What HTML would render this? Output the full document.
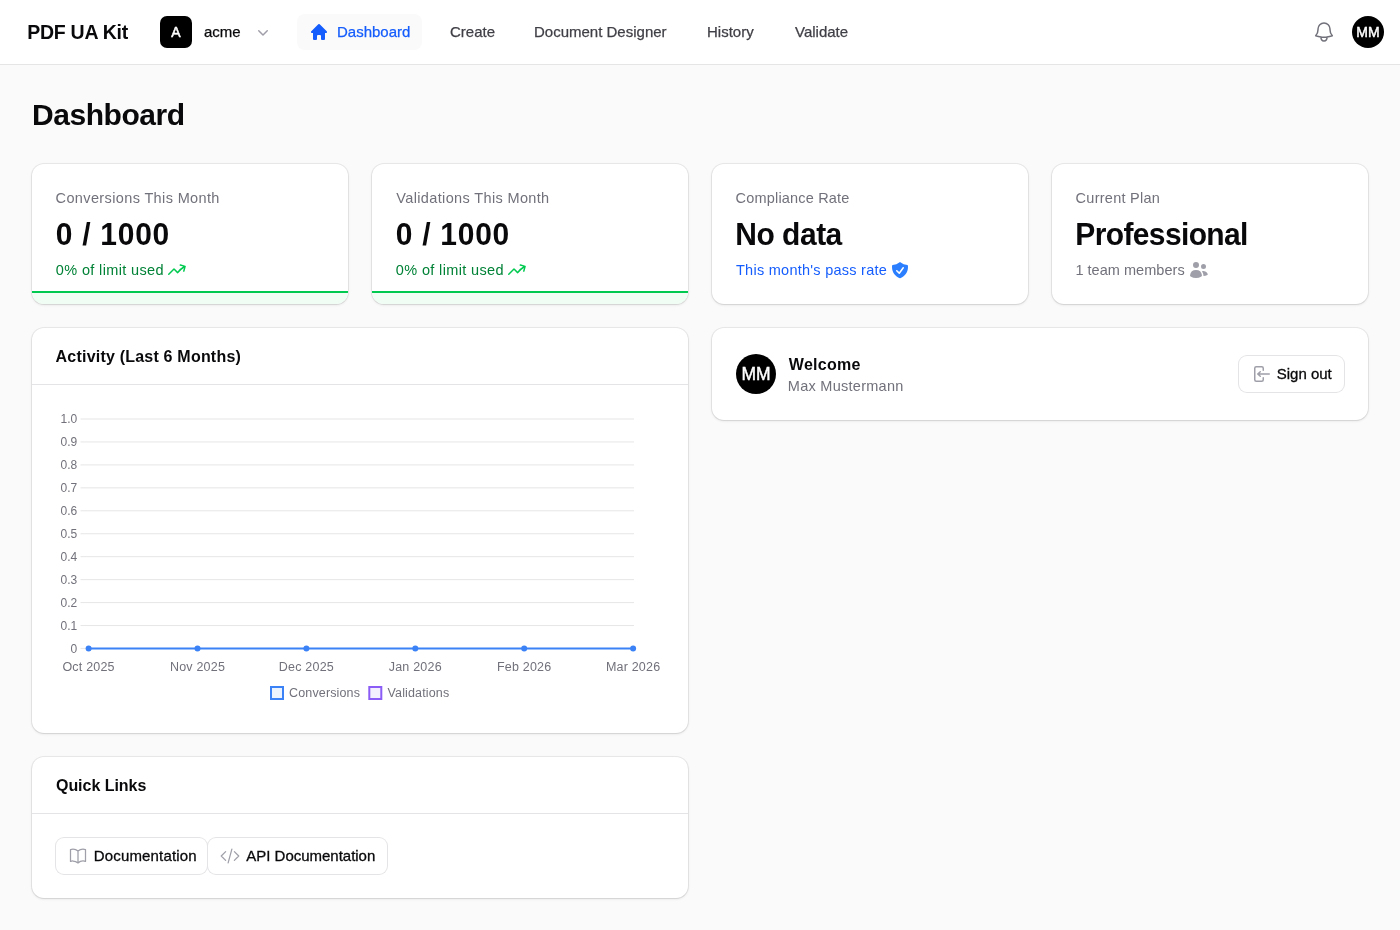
<!DOCTYPE html>
<html lang="en">
<head>
<meta charset="utf-8">
<title>PDF UA Kit - Dashboard</title>
<style>
*{box-sizing:border-box;margin:0;padding:0}
html,body{width:1400px;height:930px;overflow:hidden}
body{will-change:transform;background:#fafafa;font-family:"Liberation Sans",sans-serif;color:#09090b;position:relative}
.abs{position:absolute;white-space:nowrap}
header{position:absolute;left:0;top:0;width:1400px;height:65px;background:#fff;border-bottom:1px solid #e5e5e5}
.brand{left:28px;top:19.500px;font-size:19.500px;font-weight:700;line-height:24px;letter-spacing:0.150px}
.orgav{left:160px;top:16px;width:32px;height:32px;border-radius:7px;background:#000;color:#fff;font-size:14px;text-align:center;line-height:32px;-webkit-text-stroke:0.500px #fff}
.org{left:204px;top:22px;font-size:15px;line-height:20px;color:#09090b;-webkit-text-stroke:0.250px #09090b}
.navpill{left:297px;top:14px;width:125px;height:36px;border-radius:8px;background:#fafafa}
.nav{top:22px;font-size:15px;line-height:20px;color:#3f3f46;-webkit-text-stroke:0.250px #3f3f46}
.nav.active{color:#155dfc;-webkit-text-stroke-color:#155dfc}
.avatar{border-radius:50%;background:#000;color:#fff;text-align:center;-webkit-text-stroke:0.450px #fff}
h1{position:absolute;left:32px;top:96.500px;font-size:30px;line-height:36px;font-weight:700;letter-spacing:-0.450px;white-space:nowrap}
.card{position:absolute;background:#fff;border-radius:12px;box-shadow:0 0 0 1px rgba(9,9,11,.07),0 1px 3px 0 rgba(0,0,0,.1),0 1px 2px -1px rgba(0,0,0,.1);overflow:hidden}
.stat{top:164px;width:316px;height:140px}
.stat .lbl{position:absolute;left:24px;top:24px;font-size:14.500px;line-height:20px;color:#71717b;white-space:nowrap;letter-spacing:.3px}
.stat .val{position:absolute;left:24px;top:52.500px;font-size:30px;line-height:36px;font-weight:700;white-space:nowrap;letter-spacing:-0.400px;transform:scaleY(1.045);transform-origin:0 28.500px}
.stat .sub{position:absolute;left:24px;top:96px;font-size:14.500px;line-height:20px;white-space:nowrap;letter-spacing:.3px}
.green{color:#008236}.blue{color:#155dfc}.gray{color:#71717b}
.bar{position:absolute;left:0;right:0;top:127px;height:13px;background:#f0fdf4;border-top:2px solid #00c950}
.chead{position:absolute;left:0;right:0;top:0;height:57px;border-bottom:1px solid #e4e4e7}
.chead span{position:absolute;left:24px;top:19px;font-size:16px;line-height:20px;font-weight:700;white-space:nowrap;letter-spacing:.1px}
.btn{position:absolute;height:36px;border-radius:8px;background:#fff;box-shadow:0 0 0 1px #e4e4e7;font-size:15px;line-height:36px;white-space:nowrap;-webkit-text-stroke:0.300px #09090b}
svg{position:absolute;overflow:visible}
svg text{font-family:"Liberation Sans",sans-serif}
.ic{fill:none;stroke:#9f9fa9;stroke-width:1.5;stroke-linecap:round;stroke-linejoin:round}
</style>
</head>
<body>
<header>
  <div id="brand" class="abs brand" style="letter-spacing:-0.250px;margin-left:-0.86px">PDF UA Kit</div>
  <div class="abs orgav">A</div>
  <div class="abs org">acme</div>
  <svg style="left:253px;top:22px" width="20" height="20" viewBox="0 0 20 20"><path fill="#9f9fa9" fill-rule="evenodd" clip-rule="evenodd" d="M5.220 8.220a.750.750 0 0 1 1.060 0L10 11.940l3.720-3.720a.750.750 0 1 1 1.060 1.060l-4.250 4.250a.750.750 0 0 1-1.060 0L5.220 9.280a.750.750 0 0 1 0-1.060Z"/></svg>
  <div class="abs navpill"></div>
  <svg style="left:309px;top:22px" width="20" height="20" viewBox="0 0 20 20"><path fill="#155dfc" d="M9.293 2.293a1 1 0 0 1 1.414 0l7 7A1 1 0 0 1 17 11h-1v6a1 1 0 0 1-1 1h-2a1 1 0 0 1-1-1v-3a1 1 0 0 0-1-1H9a1 1 0 0 0-1 1v3a1 1 0 0 1-1 1H5a1 1 0 0 1-1-1v-6H3a1 1 0 0 1-.707-1.707l7-7Z"/></svg>
  <div class="abs nav active" style="left:337px">Dashboard</div>
  <div class="abs nav" style="left:450px">Create</div>
  <div class="abs nav" style="left:534px">Document Designer</div>
  <div class="abs nav" style="left:707px">History</div>
  <div class="abs nav" style="left:795px">Validate</div>
  <svg style="left:1312px;top:20px" width="24" height="24" viewBox="0 0 24 24"><path class="ic" style="stroke:#71717b" d="M14.857 17.082a23.848 23.848 0 0 0 5.454-1.310A8.967 8.967 0 0 1 18 9.750V9A6 6 0 0 0 6 9v.750a8.967 8.967 0 0 1-2.312 6.022c1.733.640 3.560 1.085 5.455 1.310m5.714 0a24.255 24.255 0 0 1-5.714 0m5.714 0a3 3 0 1 1-5.714 0"/></svg>
  <div class="abs avatar" style="left:1352px;top:16px;width:32px;height:32px;font-size:14px;line-height:32px">MM</div>
</header>

<h1>Dashboard</h1>

<div class="card stat" style="left:32px">
  <div id="lbl1" class="lbl" style="letter-spacing:0.369px;margin-left:-0.41px">Conversions This Month</div>
  <div id="val1" class="val" style="font-weight:700;letter-spacing:0.730px;margin-left:-0.25px">0 / 1000</div>
  <div id="sub1" class="sub green" style="letter-spacing:0.362px;margin-left:-0.20px">0% of limit used</div>
  <svg style="left:134.600px;top:96px" width="20" height="20" viewBox="0 0 20 20"><path fill="#00c950" fill-rule="evenodd" clip-rule="evenodd" d="M12.577 4.878a.750.750 0 0 1 .919-.530l4.780 1.281a.750.750 0 0 1 .531.919l-1.281 4.780a.750.750 0 0 1-1.449-.387l.810-3.022a19.407 19.407 0 0 0-5.594 5.203.750.750 0 0 1-1.139.093L7 10.060l-4.720 4.720a.750.750 0 0 1-1.060-1.061l5.250-5.250a.750.750 0 0 1 1.060 0l3.074 3.073a20.923 20.923 0 0 1 5.545-4.931l-3.042-.815a.750.750 0 0 1-.530-.919Z"/></svg>
  <div class="bar"></div>
</div>
<div class="card stat" style="left:372px">
  <div id="lbl2" class="lbl" style="letter-spacing:0.357px;margin-left:0.35px">Validations This Month</div>
  <div id="val2" class="val" style="font-weight:700;letter-spacing:0.730px;margin-left:-0.25px">0 / 1000</div>
  <div id="sub2" class="sub green" style="letter-spacing:0.362px;margin-left:-0.20px">0% of limit used</div>
  <svg style="left:134.600px;top:96px" width="20" height="20" viewBox="0 0 20 20"><path fill="#00c950" fill-rule="evenodd" clip-rule="evenodd" d="M12.577 4.878a.750.750 0 0 1 .919-.530l4.780 1.281a.750.750 0 0 1 .531.919l-1.281 4.780a.750.750 0 0 1-1.449-.387l.810-3.022a19.407 19.407 0 0 0-5.594 5.203.750.750 0 0 1-1.139.093L7 10.060l-4.720 4.720a.750.750 0 0 1-1.060-1.061l5.250-5.250a.750.750 0 0 1 1.060 0l3.074 3.073a20.923 20.923 0 0 1 5.545-4.931l-3.042-.815a.750.750 0 0 1-.530-.919Z"/></svg>
  <div class="bar"></div>
</div>
<div class="card stat" style="left:712px">
  <div id="lbl3" class="lbl" style="letter-spacing:0.182px;margin-left:-0.41px">Compliance Rate</div>
  <div id="val3" class="val" style="font-weight:700;letter-spacing:-0.492px;margin-left:-0.75px">No data</div>
  <div id="sub3" class="sub blue" style="letter-spacing:0.260px;margin-left:-0.01px">This month's pass rate</div>
  <svg style="left:178px;top:96px" width="20" height="20" viewBox="0 0 20 20"><path fill="#2b7fff" fill-rule="evenodd" d="M9.661 2.237a.531.531 0 0 1 .678 0 11.947 11.947 0 0 0 7.078 2.749.5.5 0 0 1 .479.425c.069.520.104 1.050.104 1.590 0 5.162-3.260 9.563-7.834 11.256a.480.480 0 0 1-.332 0C5.260 16.564 2 12.163 2 7c0-.538.035-1.069.104-1.589a.500.500 0 0 1 .480-.425 11.947 11.947 0 0 0 7.077-2.750Zm4.196 5.954a.750.750 0 0 0-1.214-.882l-3.483 4.790-1.880-1.880a.750.750 0 1 0-1.060 1.061l2.500 2.500a.750.750 0 0 0 1.137-.089l4-5.500Z" clip-rule="evenodd"/></svg>
</div>
<div class="card stat" style="left:1052px">
  <div id="lbl4" class="lbl" style="letter-spacing:0.265px;margin-left:-0.41px">Current Plan</div>
  <div id="val4" class="val" style="font-weight:700;letter-spacing:-0.623px;margin-left:-0.75px">Professional</div>
  <div id="sub4" class="sub gray" style="letter-spacing:0.037px;margin-left:-0.62px">1 team members</div>
  <svg style="left:136.700px;top:96px" width="20" height="20" viewBox="0 0 20 20"><path fill="#9f9fa9" d="M7 8a3 3 0 1 0 0-6 3 3 0 0 0 0 6ZM14.500 9a2.500 2.500 0 1 0 0-5 2.500 2.500 0 0 0 0 5ZM1.615 16.428a1.224 1.224 0 0 1-.569-1.175 6.002 6.002 0 0 1 11.908 0c.058.467-.172.920-.570 1.174A9.953 9.953 0 0 1 7 18a9.953 9.953 0 0 1-5.385-1.572ZM14.500 16h-.106c.070-.297.088-.611.048-.933a7.470 7.470 0 0 0-1.588-3.755 4.502 4.502 0 0 1 5.874 2.636.818.818 0 0 1-.360.980A7.465 7.465 0 0 1 14.500 16Z"/></svg>
</div>

<!-- Activity -->
<div class="card" style="left:32px;top:328px;width:656px;height:405px">
  <div class="chead"><span id="acttitle" style="font-weight:700;letter-spacing:0.206px;margin-left:-0.40px">Activity (Last 6 Months)</span></div>
  <svg style="left:0;top:0" width="656" height="405" viewBox="32 328 656 405">
    <g stroke="rgba(0,0,0,0.1)" stroke-width="1">
      <line x1="80.500" x2="634" y1="419.00" y2="419.00"/>
      <line x1="80.500" x2="634" y1="441.95" y2="441.95"/>
      <line x1="80.500" x2="634" y1="464.90" y2="464.90"/>
      <line x1="80.500" x2="634" y1="487.85" y2="487.85"/>
      <line x1="80.500" x2="634" y1="510.80" y2="510.80"/>
      <line x1="80.500" x2="634" y1="533.75" y2="533.75"/>
      <line x1="80.500" x2="634" y1="556.70" y2="556.70"/>
      <line x1="80.500" x2="634" y1="579.65" y2="579.65"/>
      <line x1="80.500" x2="634" y1="602.60" y2="602.60"/>
      <line x1="80.500" x2="634" y1="625.55" y2="625.55"/>
      <line x1="80.500" x2="88" y1="648.400" y2="648.400"/>
    </g>
    <g font-size="12" fill="#71717b" text-anchor="end">
      <text x="77.200" y="423.2">1.0</text>
      <text x="77.200" y="446.1">0.9</text>
      <text x="77.200" y="469.1">0.8</text>
      <text x="77.200" y="492.1">0.7</text>
      <text x="77.200" y="515.0">0.6</text>
      <text x="77.200" y="538.0">0.5</text>
      <text x="77.200" y="560.9">0.4</text>
      <text x="77.200" y="583.9">0.3</text>
      <text x="77.200" y="606.8">0.2</text>
      <text x="77.200" y="629.8">0.1</text>
      <text x="77.200" y="652.7">0</text>
    </g>
    <line x1="88.600" x2="633.100" y1="648.500" y2="648.500" stroke="#3b82f6" stroke-width="2"/>
    <g fill="#3b82f6"><circle cx="88.6" cy="648.500" r="3"/><circle cx="197.5" cy="648.500" r="3"/><circle cx="306.4" cy="648.500" r="3"/><circle cx="415.3" cy="648.500" r="3"/><circle cx="524.2" cy="648.500" r="3"/><circle cx="633.1" cy="648.500" r="3"/></g>
    <g font-size="12.500" fill="#71717b" text-anchor="middle" letter-spacing="0.200">
      <text x="88.6" y="670.700">Oct 2025</text>
      <text x="197.5" y="670.700">Nov 2025</text>
      <text x="306.4" y="670.700">Dec 2025</text>
      <text x="415.3" y="670.700">Jan 2026</text>
      <text x="524.2" y="670.700">Feb 2026</text>
      <text x="633.1" y="670.700">Mar 2026</text>
    </g>
    <rect x="271" y="687" width="12" height="12" fill="#ebf3fe" stroke="#3b82f6" stroke-width="2"/>
    <rect x="369.300" y="687" width="12" height="12" fill="#f3effe" stroke="#8b5cf6" stroke-width="2"/>
    <g font-size="12.500" fill="#71717b" letter-spacing="0.150">
      <text x="289" y="696.700">Conversions</text>
      <text x="387.500" y="696.700">Validations</text>
    </g>
  </svg>
</div>

<!-- Quick links -->
<div class="card" style="left:32px;top:757px;width:656px;height:141px">
  <div class="chead"><span id="qltitle" style="font-weight:700;letter-spacing:-0.034px;margin-left:-0.04px">Quick Links</span></div>
  <div class="btn" style="left:24px;top:81px;width:151px;padding-left:38px"><span id="doc" style="letter-spacing:0.161px;margin-left:-0.28px">Documentation</span></div>
  <svg style="left:36px;top:89px" width="20" height="20" viewBox="0 0 24 24"><path class="ic" d="M12 6.042A8.967 8.967 0 0 0 6 3.750c-1.052 0-2.062.180-3 .512v14.250A8.987 8.987 0 0 1 6 18c2.305 0 4.408.867 6 2.292m0-14.250a8.966 8.966 0 0 1 6-2.292c1.052 0 2.062.180 3 .512v14.250A8.987 8.987 0 0 0 18 18a8.967 8.967 0 0 0-6 2.292m0-14.250v14.250"/></svg>
  <div class="btn" style="left:176px;top:81px;width:179px;padding-left:38px"><span id="api" style="letter-spacing:-0.015px;margin-left:0.30px">API Documentation</span></div>
  <svg style="left:188px;top:89px" width="20" height="20" viewBox="0 0 24 24"><path class="ic" d="M17.250 6.750 22.500 12l-5.250 5.250m-10.500 0L1.500 12l5.250-5.250m7.500-3-4.500 16.500"/></svg>
</div>

<!-- Welcome -->
<div class="card" style="left:712px;top:328px;width:656px;height:92px">
  <div class="abs avatar" style="left:24px;top:26px;width:40px;height:40px;font-size:17.500px;line-height:40px">MM</div>
  <div class="abs" style="left:76px;top:27px;font-size:16px;line-height:20px;font-weight:700;letter-spacing:0.261px;margin-left:0.85px" id="welcome">Welcome</div>
  <div class="abs gray" style="left:76px;top:48px;font-size:14.500px;line-height:20px;letter-spacing:0.267px;margin-left:-0.17px" id="maxm">Max Mustermann</div>
  <div class="btn" style="left:527px;top:28px;width:105px;padding-left:38px"><span id="signout" style="letter-spacing:-0.022px;margin-left:-0.21px">Sign out</span></div>
  <svg style="left:539.100px;top:36px" width="20" height="20" viewBox="0 0 20 20"><g fill="#9f9fa9" fill-rule="evenodd" clip-rule="evenodd"><path d="M3 4.250A2.250 2.250 0 0 1 5.250 2h5.500A2.250 2.250 0 0 1 13 4.250v2a.750.750 0 0 1-1.500 0v-2a.750.750 0 0 0-.750-.750h-5.500a.750.750 0 0 0-.750.750v11.500c0 .414.336.750.750.750h5.500a.750.750 0 0 0 .750-.750v-2a.750.750 0 0 1 1.500 0v2A2.250 2.250 0 0 1 10.750 18h-5.500A2.250 2.250 0 0 1 3 15.750V4.250Z"/><path d="M19 10a.750.750 0 0 0-.750-.750H8.704l1.048-.943a.750.750 0 1 0-1.004-1.114l-2.500 2.250a.750.750 0 0 0 0 1.114l2.500 2.250a.750.750 0 1 0 1.004-1.114l-1.048-.943h9.546A.750.750 0 0 0 19 10Z"/></g></svg>
</div>
</body>
</html>
